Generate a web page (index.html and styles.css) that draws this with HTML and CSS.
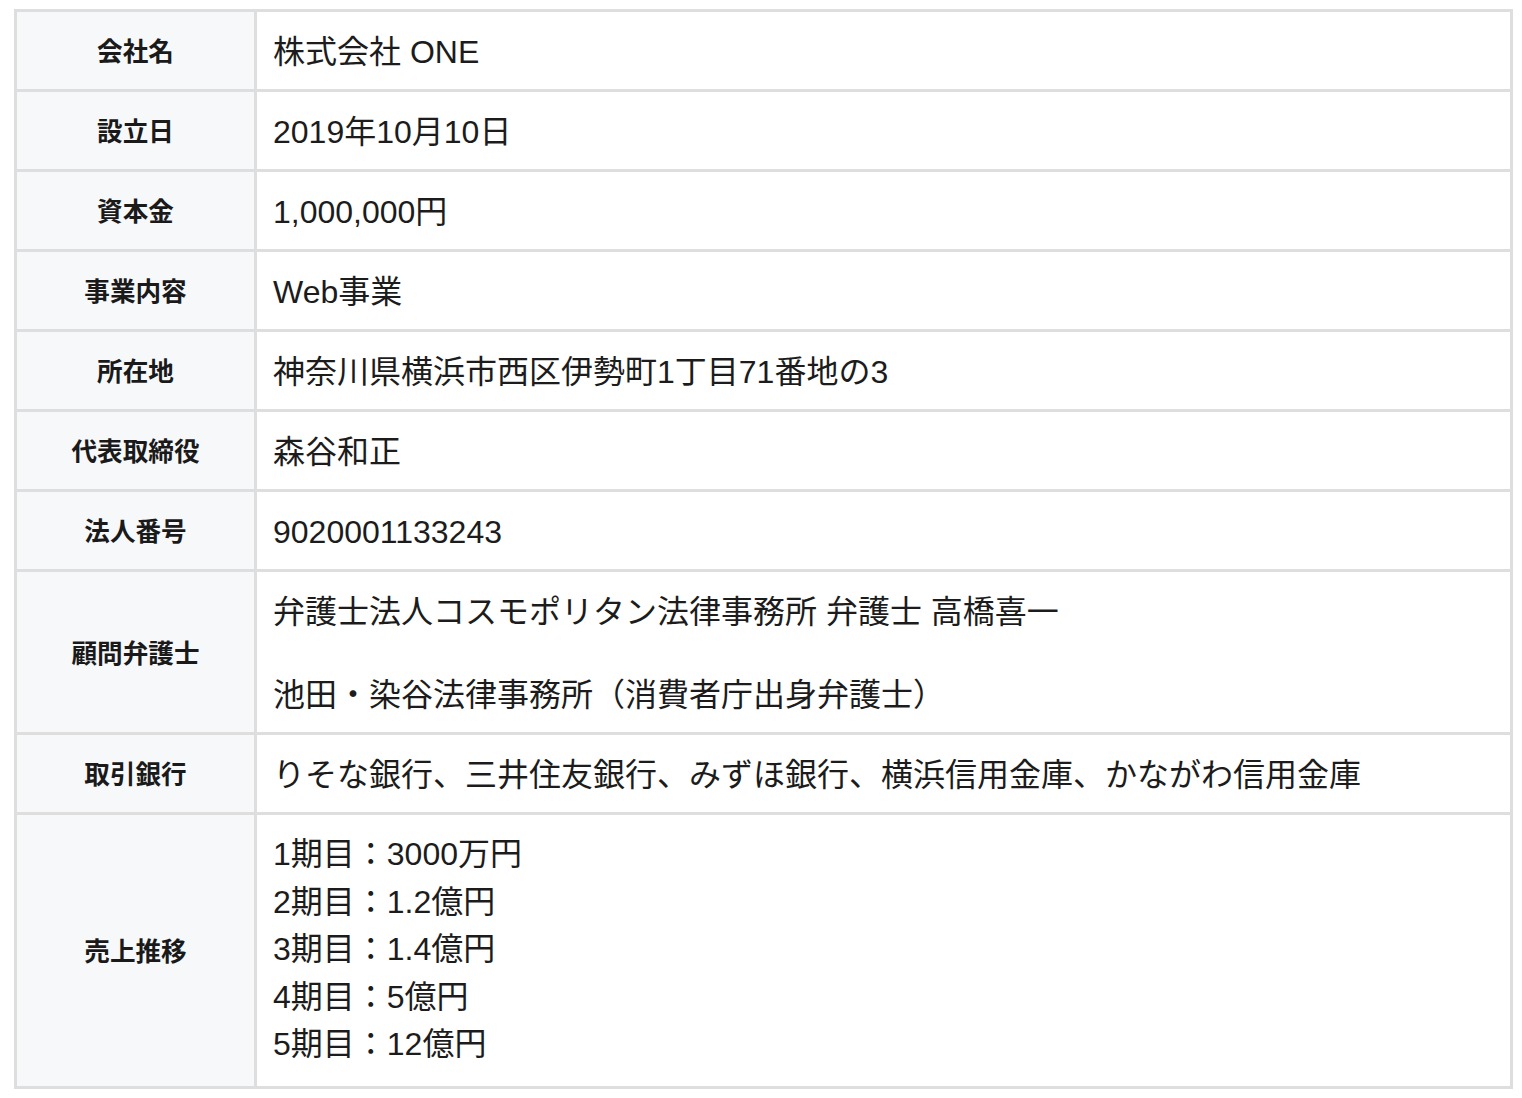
FILE: index.html
```html
<!DOCTYPE html>
<html lang="ja">
<head>
<meta charset="utf-8">
<title>会社概要</title>
<link rel="stylesheet" href="styles.css">
</head>
<body>
<div class="wrap">
<table class="company">
  <tbody>
    <tr><th>会社名</th><td>株式会社 ONE</td></tr>
    <tr><th>設立日</th><td>2019年10月10日</td></tr>
    <tr><th>資本金</th><td>1,000,000円</td></tr>
    <tr><th>事業内容</th><td>Web事業</td></tr>
    <tr><th>所在地</th><td>神奈川県横浜市西区伊勢町1丁目71番地の3</td></tr>
    <tr><th>代表取締役</th><td>森谷和正</td></tr>
    <tr><th>法人番号</th><td>9020001133243</td></tr>
    <tr><th>顧問弁護士</th><td class="multi"><p>弁護士法人コスモポリタン法律事務所 弁護士 高橋喜一</p><p>池田・染谷法律事務所（消費者庁出身弁護士）</p></td></tr>
    <tr><th>取引銀行</th><td>りそな銀行、三井住友銀行、みずほ銀行、横浜信用金庫、かながわ信用金庫</td></tr>
    <tr><th>売上推移</th><td class="sales">1期目：3000万円<br>2期目：1.2億円<br>3期目：1.4億円<br>4期目：5億円<br>5期目：12億円</td></tr>
  </tbody>
</table>
</div>
</body>
</html>
```

FILE: styles.css
```css
html, body {
  margin: 0;
  padding: 0;
  background: #ffffff;
}
.wrap {
  padding: 9px 0 0 14px;
}
.company {
  width: 1499px;
  border-collapse: collapse;
  border: 3px solid #dedede;
  font-family: "Liberation Sans", "Noto Sans CJK JP", sans-serif;
  color: #1c1c1c;
}
.company th,
.company td {
  border: 3px solid #dedede;
  vertical-align: middle;
  line-height: 48px;
}
.company th {
  width: 237px;
  padding: 16px 0 13px;
  background: #f7f8fa;
  font-size: 25.6px;
  font-weight: bold;
  text-align: center;
  color: #1a1a1a;
}
.company td {
  padding: 16px 16px 13px;
  font-size: 32px;
  text-align: left;
  background: #ffffff;
}
.company td.multi p {
  margin: 0;
}
.company td.multi p + p {
  margin-top: 35px;
}
.company td.sales {
  line-height: 47.6px;
  padding-top: 16px;
  padding-bottom: 17px;
}
```
